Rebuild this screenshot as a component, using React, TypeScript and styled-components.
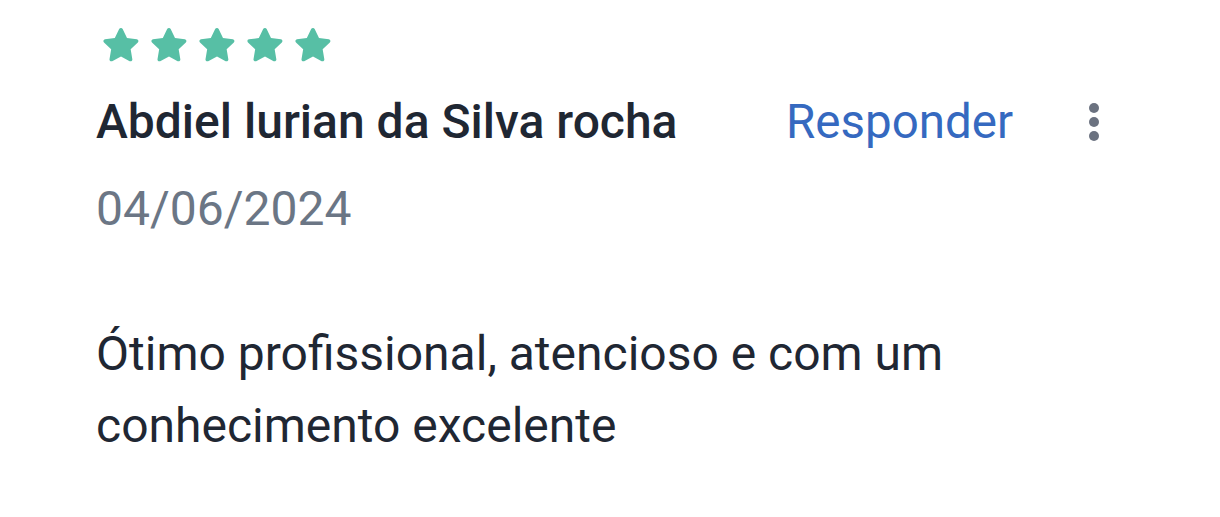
import styled, { createGlobalStyle } from 'styled-components';

const GlobalStyle = createGlobalStyle`
  html, body {
    margin: 0;
    padding: 0;
    background: #ffffff;
  }
  body {
    font-family: Roboto, "Noto Sans", "Liberation Sans", sans-serif;
  }
`;

const Card = styled.div`
  width: 1220px;
  height: 517px;
  box-sizing: border-box;
  padding: 25px 0 0 96px;
  background: #ffffff;
  display: flex;
  flex-direction: column;
`;

const Stars = styled.div`
  display: flex;
  gap: 8px;
  margin-left: 5px;
  height: 40px;
`;

const HeaderRow = styled.div`
  display: flex;
  align-items: center;
  margin-top: 28px;
  height: 58px;
`;

const Name = styled.div`
  font-size: 48px;
  line-height: 58px;
  font-weight: 500;
  color: #1f2733;
  width: 690px;
  white-space: nowrap;
`;

const Reply = styled.button`
  border: none;
  background: none;
  padding: 0;
  font-family: inherit;
  font-size: 47.5px;
  line-height: 58px;
  color: #3569c0;
  cursor: pointer;
`;

const MoreButton = styled.button`
  border: none;
  background: none;
  padding: 0;
  margin-left: 76px;
  display: flex;
  flex-direction: column;
  gap: 4px;
  cursor: pointer;
`;

const Dot = styled.span`
  width: 10px;
  height: 10px;
  border-radius: 50%;
  background: #6b7280;
`;

const DateText = styled.div`
  font-size: 48px;
  line-height: 58px;
  color: #6b7685;
  margin-top: 29px;
`;

const Body = styled.p`
  margin: 80px 0 0;
  font-size: 48px;
  line-height: 72px;
  color: #1f2733;
  width: 1000px;
`;

const Star = () => (
  <svg width="40" height="40" viewBox="0 0 24 24">
    <path
      fill="#57bfa5"
      d="M12 1.8c.4 0 .8.2 1 .6l2.6 5.4 5.9.8c.9.1 1.3 1.2.6 1.9l-4.3 4.1 1 5.9c.2.9-.8 1.6-1.6 1.2L12 18.9l-5.3 2.8c-.8.4-1.8-.3-1.6-1.2l1-5.9-4.3-4.1c-.7-.7-.3-1.8.6-1.9l5.9-.8 2.6-5.4c.2-.4.6-.6 1.1-.6z"
    />
  </svg>
);

const App = () => {
  return (
    <>
      <GlobalStyle />
      <Card>
        <Stars>
          {[0, 1, 2, 3, 4].map((i) => (
            <Star key={i} />
          ))}
        </Stars>
        <HeaderRow>
          <Name>Abdiel lurian da Silva rocha</Name>
          <Reply>Responder</Reply>
          <MoreButton aria-label="Mais opções">
            <Dot />
            <Dot />
            <Dot />
          </MoreButton>
        </HeaderRow>
        <DateText>04/06/2024</DateText>
        <Body>
          Ótimo profissional, atencioso e com um
          <br />
          conhecimento excelente
        </Body>
      </Card>
    </>
  );
};

export default App;
